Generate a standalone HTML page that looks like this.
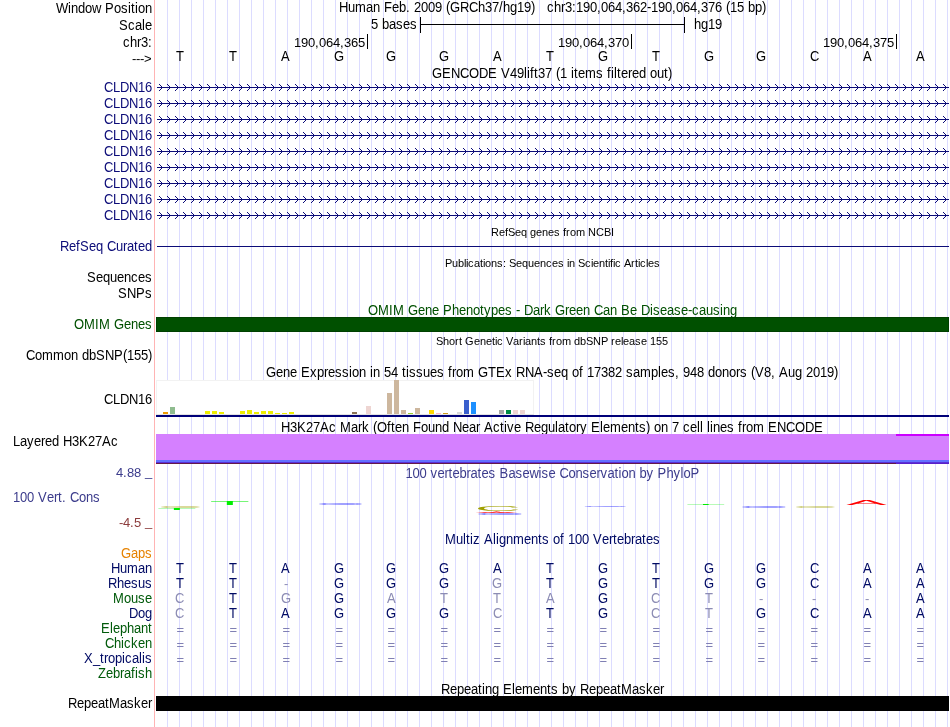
<!DOCTYPE html>
<html><head><meta charset="utf-8"><title>UCSC Genome Browser chr3:190,064,362-190,064,376</title>
<style>
html,body{margin:0;padding:0;background:#fff;}
svg{display:block;font-family:'Liberation Sans', Arial, Helvetica, sans-serif;font-size:13px;will-change:transform;}
</style></head>
<body>
<svg width="950" height="727" viewBox="0 0 950 727">
<rect width="950" height="727" fill="#fff"/>
<g shape-rendering="crispEdges">
<rect x="167" y="0" width="1" height="727" fill="#dcdcff"/>
<rect x="179" y="0" width="1" height="727" fill="#dcdcff"/>
<rect x="191" y="0" width="1" height="727" fill="#dcdcff"/>
<rect x="203" y="0" width="1" height="727" fill="#dcdcff"/>
<rect x="215" y="0" width="1" height="727" fill="#dcdcff"/>
<rect x="227" y="0" width="1" height="727" fill="#dcdcff"/>
<rect x="239" y="0" width="1" height="727" fill="#dcdcff"/>
<rect x="251" y="0" width="1" height="727" fill="#dcdcff"/>
<rect x="263" y="0" width="1" height="727" fill="#dcdcff"/>
<rect x="275" y="0" width="1" height="727" fill="#dcdcff"/>
<rect x="287" y="0" width="1" height="727" fill="#dcdcff"/>
<rect x="299" y="0" width="1" height="727" fill="#dcdcff"/>
<rect x="311" y="0" width="1" height="727" fill="#dcdcff"/>
<rect x="323" y="0" width="1" height="727" fill="#dcdcff"/>
<rect x="335" y="0" width="1" height="727" fill="#dcdcff"/>
<rect x="347" y="0" width="1" height="727" fill="#dcdcff"/>
<rect x="359" y="0" width="1" height="727" fill="#dcdcff"/>
<rect x="371" y="0" width="1" height="727" fill="#dcdcff"/>
<rect x="383" y="0" width="1" height="727" fill="#dcdcff"/>
<rect x="395" y="0" width="1" height="727" fill="#dcdcff"/>
<rect x="407" y="0" width="1" height="727" fill="#dcdcff"/>
<rect x="419" y="0" width="1" height="727" fill="#dcdcff"/>
<rect x="431" y="0" width="1" height="727" fill="#dcdcff"/>
<rect x="443" y="0" width="1" height="727" fill="#dcdcff"/>
<rect x="455" y="0" width="1" height="727" fill="#dcdcff"/>
<rect x="467" y="0" width="1" height="727" fill="#dcdcff"/>
<rect x="479" y="0" width="1" height="727" fill="#dcdcff"/>
<rect x="491" y="0" width="1" height="727" fill="#dcdcff"/>
<rect x="503" y="0" width="1" height="727" fill="#dcdcff"/>
<rect x="515" y="0" width="1" height="727" fill="#dcdcff"/>
<rect x="527" y="0" width="1" height="727" fill="#dcdcff"/>
<rect x="539" y="0" width="1" height="727" fill="#dcdcff"/>
<rect x="551" y="0" width="1" height="727" fill="#dcdcff"/>
<rect x="563" y="0" width="1" height="727" fill="#dcdcff"/>
<rect x="575" y="0" width="1" height="727" fill="#dcdcff"/>
<rect x="587" y="0" width="1" height="727" fill="#dcdcff"/>
<rect x="599" y="0" width="1" height="727" fill="#dcdcff"/>
<rect x="611" y="0" width="1" height="727" fill="#dcdcff"/>
<rect x="623" y="0" width="1" height="727" fill="#dcdcff"/>
<rect x="635" y="0" width="1" height="727" fill="#dcdcff"/>
<rect x="647" y="0" width="1" height="727" fill="#dcdcff"/>
<rect x="659" y="0" width="1" height="727" fill="#dcdcff"/>
<rect x="671" y="0" width="1" height="727" fill="#dcdcff"/>
<rect x="683" y="0" width="1" height="727" fill="#dcdcff"/>
<rect x="695" y="0" width="1" height="727" fill="#dcdcff"/>
<rect x="707" y="0" width="1" height="727" fill="#dcdcff"/>
<rect x="719" y="0" width="1" height="727" fill="#dcdcff"/>
<rect x="731" y="0" width="1" height="727" fill="#dcdcff"/>
<rect x="743" y="0" width="1" height="727" fill="#dcdcff"/>
<rect x="755" y="0" width="1" height="727" fill="#dcdcff"/>
<rect x="767" y="0" width="1" height="727" fill="#dcdcff"/>
<rect x="779" y="0" width="1" height="727" fill="#dcdcff"/>
<rect x="791" y="0" width="1" height="727" fill="#dcdcff"/>
<rect x="803" y="0" width="1" height="727" fill="#dcdcff"/>
<rect x="815" y="0" width="1" height="727" fill="#dcdcff"/>
<rect x="827" y="0" width="1" height="727" fill="#dcdcff"/>
<rect x="839" y="0" width="1" height="727" fill="#dcdcff"/>
<rect x="851" y="0" width="1" height="727" fill="#dcdcff"/>
<rect x="863" y="0" width="1" height="727" fill="#dcdcff"/>
<rect x="875" y="0" width="1" height="727" fill="#dcdcff"/>
<rect x="887" y="0" width="1" height="727" fill="#dcdcff"/>
<rect x="899" y="0" width="1" height="727" fill="#dcdcff"/>
<rect x="911" y="0" width="1" height="727" fill="#dcdcff"/>
<rect x="923" y="0" width="1" height="727" fill="#dcdcff"/>
<rect x="935" y="0" width="1" height="727" fill="#dcdcff"/>
<rect x="947" y="0" width="1" height="727" fill="#dcdcff"/>
<rect x="154" y="0" width="1" height="727" fill="#ffb4b4"/>
</g>
<text transform="translate(0,13) scale(1,1.07)"><tspan x="56 68 71 78 85 92">Window</tspan> <tspan x="105 114 121 128 131 135 138 145">Position</tspan></text>
<text transform="translate(0,12) scale(1,1.07)"><tspan x="339 348 355 366 373">Human</tspan> <tspan x="384 392 399 406">Feb.</tspan> <tspan x="414 421 428 435">2009</tspan> <tspan x="446 450 460 469 478 485 492 499 503 510 517 524 531">(GRCh37/hg19)</tspan> <tspan x="547 554 561 565 572 576 583 590 597 601 608 615 622 626 633 640 647 651 658 665 672 676 683 690 697 701 708 715">chr3:190,064,362-190,064,376</tspan> <tspan x="726 730 737">(15</tspan> <tspan x="748 755 762">bp)</tspan></text>
<text transform="translate(0,30) scale(1,1.07)"><tspan x="119 128 135 142 145">Scale</tspan></text>
<text transform="translate(0,29) scale(1,1.07)"><tspan x="371">5</tspan> <tspan x="382 389 396 403 410">bases</tspan></text>
<text transform="translate(0,29) scale(1,1.07)"><tspan x="694 701 708 715">hg19</tspan></text>
<g shape-rendering="crispEdges">
<rect x="420" y="24" width="265" height="1" fill="#000"/>
<rect x="420" y="17" width="1" height="16" fill="#000"/>
<rect x="684" y="17" width="1" height="16" fill="#000"/>
</g>
<text transform="translate(0,47) scale(1,1.07)"><tspan x="123 130 137 141 148">chr3:</tspan></text>
<text transform="translate(0,47) scale(1,1.0)"><tspan x="294 301 308 315 319 326 333 340 344 351 358">190,064,365</tspan></text>
<rect x="367" y="34" width="1" height="15" fill="#000" shape-rendering="crispEdges"/>
<text transform="translate(0,47) scale(1,1.0)"><tspan x="558 565 572 579 583 590 597 604 608 615 622">190,064,370</tspan></text>
<rect x="631" y="34" width="1" height="15" fill="#000" shape-rendering="crispEdges"/>
<text transform="translate(0,47) scale(1,1.0)"><tspan x="823 830 837 844 848 855 862 869 873 880 887">190,064,375</tspan></text>
<rect x="896" y="34" width="1" height="15" fill="#000" shape-rendering="crispEdges"/>
<text transform="translate(0,63) scale(1,1.0)"><tspan x="132 136 140 144">---&gt;</tspan></text>
<text transform="translate(0,61) scale(1,1.11)"><tspan x="176">T</tspan></text>
<text transform="translate(0,61) scale(1,1.11)"><tspan x="229">T</tspan></text>
<text transform="translate(0,61) scale(1,1.11)"><tspan x="281">A</tspan></text>
<text transform="translate(0,61) scale(1,1.11)"><tspan x="334">G</tspan></text>
<text transform="translate(0,61) scale(1,1.11)"><tspan x="386">G</tspan></text>
<text transform="translate(0,61) scale(1,1.11)"><tspan x="439">G</tspan></text>
<text transform="translate(0,61) scale(1,1.11)"><tspan x="493">A</tspan></text>
<text transform="translate(0,61) scale(1,1.11)"><tspan x="546">T</tspan></text>
<text transform="translate(0,61) scale(1,1.11)"><tspan x="598">G</tspan></text>
<text transform="translate(0,61) scale(1,1.11)"><tspan x="652">T</tspan></text>
<text transform="translate(0,61) scale(1,1.11)"><tspan x="704">G</tspan></text>
<text transform="translate(0,61) scale(1,1.11)"><tspan x="756">G</tspan></text>
<text transform="translate(0,61) scale(1,1.11)"><tspan x="810">C</tspan></text>
<text transform="translate(0,61) scale(1,1.11)"><tspan x="863">A</tspan></text>
<text transform="translate(0,61) scale(1,1.11)"><tspan x="916">A</tspan></text>
<text transform="translate(0,78) scale(1,1.07)"><tspan x="432 442 451 460 469 479 488">GENCODE</tspan> <tspan x="501 510 517 524 527 530 534 538 545">V49lift37</tspan> <tspan x="556 560">(1</tspan> <tspan x="571 574 578 585 596">items</tspan> <tspan x="607 611 614 617 621 628 632 639">filtered</tspan> <tspan x="650 657 664 668">out)</tspan></text>
<defs><pattern id="chev" x="155" y="0" width="8" height="16" patternUnits="userSpaceOnUse"><path fill="#0c0c78" d="M4,0h1v1h1v1h1v1h1v1h-1v1h-1v1h-1v1h-1v-1h1v-1h1v-1h-3v-1h3v-1h-1v-1h-1z"/></pattern></defs>
<g shape-rendering="crispEdges">
<rect x="157" y="87" width="792" height="1" fill="#0c0c78"/>
<g transform="translate(0,84)"><rect x="157" y="0" width="792" height="7" fill="url(#chev)"/></g>
<rect x="157" y="103" width="792" height="1" fill="#0c0c78"/>
<g transform="translate(0,100)"><rect x="157" y="0" width="792" height="7" fill="url(#chev)"/></g>
<rect x="157" y="119" width="792" height="1" fill="#0c0c78"/>
<g transform="translate(0,116)"><rect x="157" y="0" width="792" height="7" fill="url(#chev)"/></g>
<rect x="157" y="135" width="792" height="1" fill="#0c0c78"/>
<g transform="translate(0,132)"><rect x="157" y="0" width="792" height="7" fill="url(#chev)"/></g>
<rect x="157" y="151" width="792" height="1" fill="#0c0c78"/>
<g transform="translate(0,148)"><rect x="157" y="0" width="792" height="7" fill="url(#chev)"/></g>
<rect x="157" y="167" width="792" height="1" fill="#0c0c78"/>
<g transform="translate(0,164)"><rect x="157" y="0" width="792" height="7" fill="url(#chev)"/></g>
<rect x="157" y="183" width="792" height="1" fill="#0c0c78"/>
<g transform="translate(0,180)"><rect x="157" y="0" width="792" height="7" fill="url(#chev)"/></g>
<rect x="157" y="199" width="792" height="1" fill="#0c0c78"/>
<g transform="translate(0,196)"><rect x="157" y="0" width="792" height="7" fill="url(#chev)"/></g>
<rect x="157" y="215" width="792" height="1" fill="#0c0c78"/>
<g transform="translate(0,212)"><rect x="157" y="0" width="792" height="7" fill="url(#chev)"/></g>
</g>
<text transform="translate(0,92) scale(1,1.11)" fill="#0c0c78"><tspan x="104 113 120 129 138 145">CLDN16</tspan></text>
<text transform="translate(0,108) scale(1,1.11)" fill="#0c0c78"><tspan x="104 113 120 129 138 145">CLDN16</tspan></text>
<text transform="translate(0,124) scale(1,1.11)" fill="#0c0c78"><tspan x="104 113 120 129 138 145">CLDN16</tspan></text>
<text transform="translate(0,140) scale(1,1.11)" fill="#0c0c78"><tspan x="104 113 120 129 138 145">CLDN16</tspan></text>
<text transform="translate(0,156) scale(1,1.11)" fill="#0c0c78"><tspan x="104 113 120 129 138 145">CLDN16</tspan></text>
<text transform="translate(0,172) scale(1,1.11)" fill="#0c0c78"><tspan x="104 113 120 129 138 145">CLDN16</tspan></text>
<text transform="translate(0,188) scale(1,1.11)" fill="#0c0c78"><tspan x="104 113 120 129 138 145">CLDN16</tspan></text>
<text transform="translate(0,204) scale(1,1.11)" fill="#0c0c78"><tspan x="104 113 120 129 138 145">CLDN16</tspan></text>
<text transform="translate(0,220) scale(1,1.11)" fill="#0c0c78"><tspan x="104 113 120 129 138 145">CLDN16</tspan></text>
<text transform="translate(0,236) scale(1,1.05)" font-size="11"><tspan x="491 499 505 508 515 521">RefSeq</tspan> <tspan x="530 536 542 548 554">genes</tspan> <tspan x="563 566 570 576">from</tspan> <tspan x="588 596 604 611">NCBI</tspan></text>
<text transform="translate(0,251) scale(1,1.07)" fill="#0c0c78"><tspan x="60 69 76 80 89 96">RefSeq</tspan> <tspan x="107 116 123 127 134 138 145">Curated</tspan></text>
<rect x="157" y="246" width="792" height="1" fill="#0c0c78"/>
<text transform="translate(0,267) scale(1,1.05)" font-size="11"><tspan x="445 452 458 464 466 468 474 480 483 485 491 497 503">Publications:</tspan> <tspan x="509 516 522 528 534 540 546 552 558">Sequences</tspan> <tspan x="567 569">in</tspan> <tspan x="578 585 591 593 599 605 608 610 613 615">Scientific</tspan> <tspan x="624 631 635 638 640 646 648 654">Articles</tspan></text>
<text transform="translate(0,282) scale(1,1.07)"><tspan x="87 96 103 110 117 124 131 138 145">Sequences</tspan></text>
<text transform="translate(0,298) scale(1,1.07)"><tspan x="118 127 136 145">SNPs</tspan></text>
<text transform="translate(0,315) scale(1,1.07)" fill="#005000"><tspan x="368 378 389 393">OMIM</tspan> <tspan x="408 418 425 432">Gene</tspan> <tspan x="443 452 459 466 473 480 484 491 498 505">Phenotypes</tspan> <tspan x="516">-</tspan> <tspan x="524 533 540 544">Dark</tspan> <tspan x="555 565 569 576 583">Green</tspan> <tspan x="594 603 610">Can</tspan> <tspan x="621 630">Be</tspan> <tspan x="641 650 653 660 667 674 681 688 692 699 706 713 720 723 730">Disease-causing</tspan></text>
<text transform="translate(0,329) scale(1,1.07)" fill="#005000"><tspan x="74 84 95 99">OMIM</tspan> <tspan x="114 124 131 138 145">Genes</tspan></text>
<g shape-rendering="crispEdges"><rect x="156" y="317" width="793" height="15" fill="#004000"/><rect x="157" y="318" width="791" height="13" fill="#005000"/></g>
<text transform="translate(0,345) scale(1,1.05)" font-size="11"><tspan x="436 443 449 455 459">Short</tspan> <tspan x="465 474 480 486 492 495 497">Genetic</tspan> <tspan x="506 513 519 523 525 531 537 540">Variants</tspan> <tspan x="549 552 556 562">from</tspan> <tspan x="574 580 586 593 601">dbSNP</tspan> <tspan x="611 615 621 623 629 635 641">release</tspan> <tspan x="650 656 662">155</tspan></text>
<text transform="translate(0,360) scale(1,1.07)"><tspan x="26 35 42 53 64 71">Common</tspan> <tspan x="82 89 96 105 114 123 127 134 141 148">dbSNP(155)</tspan></text>
<text transform="translate(0,377) scale(1,1.07)"><tspan x="266 276 283 290">Gene</tspan> <tspan x="301 310 317 324 328 335 342 349 352 359">Expression</tspan> <tspan x="370 373">in</tspan> <tspan x="384 391">54</tspan> <tspan x="402 406 409 416 423 430 437">tissues</tspan> <tspan x="448 452 456 463">from</tspan> <tspan x="478 488 496 505">GTEx</tspan> <tspan x="516 525 534 543 547 554 561">RNA-seq</tspan> <tspan x="572 579">of</tspan> <tspan x="587 594 601 608 615">17382</tspan> <tspan x="626 633 640 651 658 661 668 675">samples,</tspan> <tspan x="683 690 697">948</tspan> <tspan x="708 715 722 729 736 740">donors</tspan> <tspan x="751 755 764 771">(V8,</tspan> <tspan x="779 788 795">Aug</tspan> <tspan x="806 813 820 827 834">2019)</tspan></text>
<text transform="translate(0,404) scale(1,1.11)"><tspan x="104 113 120 129 138 145">CLDN16</tspan></text>
<g shape-rendering="crispEdges">
<rect x="156" y="380" width="378" height="35" fill="#f2f2f2"/>
<rect x="157" y="381" width="376" height="33" fill="#fff"/>
<rect x="156" y="414" width="378" height="1" fill="#e4e4e4"/>
<rect x="163" y="412" width="5" height="2" fill="#EE9A00"/>
<rect x="170" y="407" width="5" height="7" fill="#8FBC8F"/>
<rect x="205" y="411" width="5" height="3" fill="#EEEE00"/>
<rect x="212" y="411" width="5" height="3" fill="#EEEE00"/>
<rect x="219" y="412" width="5" height="2" fill="#EEEE00"/>
<rect x="240" y="411" width="5" height="3" fill="#EEEE00"/>
<rect x="247" y="410" width="5" height="4" fill="#EEEE00"/>
<rect x="254" y="412" width="5" height="2" fill="#EEEE00"/>
<rect x="261" y="411" width="5" height="3" fill="#EEEE00"/>
<rect x="268" y="411" width="5" height="3" fill="#EEEE00"/>
<rect x="275" y="413" width="5" height="1" fill="#EEEE00"/>
<rect x="282" y="413" width="5" height="1" fill="#EEEE00"/>
<rect x="289" y="412" width="5" height="2" fill="#EEEE00"/>
<rect x="352" y="412" width="5" height="2" fill="#8B7355"/>
<rect x="366" y="406" width="5" height="8" fill="#EED5D2"/>
<rect x="387" y="393" width="5" height="21" fill="#CDB79E"/>
<rect x="394" y="380" width="5" height="34" fill="#CDB79E"/>
<rect x="401" y="410" width="5" height="4" fill="#CDB79E"/>
<rect x="408" y="413" width="5" height="1" fill="#9ACD32"/>
<rect x="415" y="408" width="5" height="6" fill="#CDB79E"/>
<rect x="429" y="410" width="5" height="4" fill="#FFD700"/>
<rect x="436" y="413" width="5" height="1" fill="#FFB6C1"/>
<rect x="443" y="413" width="5" height="1" fill="#CD9B1D"/>
<rect x="457" y="412" width="5" height="2" fill="#D9D9D9"/>
<rect x="464" y="400" width="5" height="14" fill="#3A5FCD"/>
<rect x="471" y="402" width="5" height="12" fill="#1E90FF"/>
<rect x="499" y="410" width="5" height="4" fill="#A6A6A6"/>
<rect x="506" y="410" width="5" height="4" fill="#008B45"/>
<rect x="513" y="410" width="5" height="4" fill="#EED5D2"/>
<rect x="520" y="410" width="5" height="4" fill="#EED5D2"/>
<rect x="156" y="415" width="793" height="2" fill="#000078"/>
</g>
<text transform="translate(0,432) scale(1,1.07)"><tspan x="281 290 297 306 313 320 329">H3K27Ac</tspan> <tspan x="340 351 358 362">Mark</tspan> <tspan x="373 377 387 391 395 402">(Often</tspan> <tspan x="413 421 428 435 442">Found</tspan> <tspan x="453 462 469 476">Near</tspan> <tspan x="484 493 500 504 507 514">Active</tspan> <tspan x="525 534 541 548 555 558 565 569 576 580">Regulatory</tspan> <tspan x="591 600 603 610 621 628 635 639 646">Elements)</tspan> <tspan x="654 661">on</tspan> <tspan x="672">7</tspan> <tspan x="683 690 697 700">cell</tspan> <tspan x="707 710 713 720 727">lines</tspan> <tspan x="738 742 746 753">from</tspan> <tspan x="768 777 786 795 805 814">ENCODE</tspan></text>
<text transform="translate(0,446) scale(1,1.07)"><tspan x="13 20 27 34 41 45 52">Layered</tspan> <tspan x="63 72 79 88 95 102 111">H3K27Ac</tspan></text>
<g shape-rendering="crispEdges">
<rect x="156" y="434" width="793" height="26" fill="#d580ff"/>
<rect x="896" y="434" width="53" height="2" fill="#cc00ff"/>
<rect x="156" y="460" width="793" height="2" fill="#6470ff"/>
<rect x="156" y="462" width="793" height="1" fill="#5a30d8"/>
<rect x="156" y="463" width="740" height="1" fill="#64184a"/>
<rect x="896" y="463" width="53" height="1" fill="#5a20c8"/>
</g>
<text transform="translate(0,478) scale(1,1.07)" fill="#3c3c8c"><tspan x="405.5 412.5 419.5">100</tspan> <tspan x="430.5 437.5 444.5 448.5 452.5 459.5 466.5 470.5 477.5 481.5 488.5">vertebrates</tspan> <tspan x="499.5 508.5 515.5 522.5 529.5 538.5 541.5 548.5">Basewise</tspan> <tspan x="559.5 568.5 575.5 582.5 589.5 596.5 600.5 607.5 614.5 618.5 621.5 628.5">Conservation</tspan> <tspan x="639.5 646.5">by</tspan> <tspan x="657.5 666.5 673.5 680.5 683.5 690.5">PhyloP</tspan></text>
<text transform="translate(0,477.2) scale(1,1.0)" fill="#3c3c8c"><tspan x="116 123 127 134">4.88</tspan></text>
<text transform="translate(0,476.3) scale(1,1.0)" fill="#3c3c8c"><tspan x="145">_</tspan></text>
<text transform="translate(0,502) scale(1,1.07)" fill="#3c3c8c"><tspan x="13 20 27">100</tspan> <tspan x="38 47 54 58 62">Vert.</tspan> <tspan x="70 79 86 93">Cons</tspan></text>
<text transform="translate(0,527.2) scale(1,1.0)" fill="#8c3c3c"><tspan x="119 123 130 134">-4.5</tspan></text>
<text transform="translate(0,526.3) scale(1,1.0)" fill="#8c3c3c"><tspan x="145">_</tspan></text>
<text transform="translate(157.63,506.99) scale(4.800,0.1086)" fill="#a0a000" fill-opacity="0.75">C</text>
<text transform="translate(157.63,507.99) scale(4.800,0.1086)" fill="#a0a000" fill-opacity="0.75">C</text>
<text transform="translate(157.04,510.00) scale(5.034,0.2237)" fill="#00ee00" text-rendering="geometricPrecision">T</text>
<text transform="translate(209.83,505.00) scale(5.061,0.4474)" fill="#00ee00">T</text>
<text transform="translate(315.59,503.99) scale(5.088,0.1086)" fill="#0000ff" fill-opacity="0.75">G</text>
<text transform="translate(315.59,504.99) scale(5.088,0.1086)" fill="#0000ff" fill-opacity="0.75">G</text>
<text transform="translate(474.75,510.93) scale(4.921,0.5429)" fill="#a0a000">C</text>
<text transform="translate(478.73,513.12) scale(4.116,0.1610)" fill="#ff0000" stroke="#ff0000" stroke-width="1.0">A</text>
<text transform="translate(475.25,513.99) scale(5.006,0.1086)" fill="#0000ff" fill-opacity="0.75">G</text>
<text transform="translate(475.25,514.99) scale(5.006,0.1086)" fill="#0000ff" fill-opacity="0.75">G</text>
<text transform="translate(581.01,506.99) scale(4.912,0.1086)" fill="#0000ff" fill-opacity="0.75">G</text>
<text transform="translate(685.94,505.00) scale(5.034,0.1119)" fill="#00ee00">T</text>
<text transform="translate(739.24,506.99) scale(5.018,0.1086)" fill="#0000ff" fill-opacity="0.75">G</text>
<text transform="translate(739.24,507.99) scale(5.018,0.1086)" fill="#0000ff" fill-opacity="0.75">G</text>
<text transform="translate(792.64,506.99) scale(4.787,0.1086)" fill="#a0a000" fill-opacity="0.75">C</text>
<text transform="translate(792.64,507.99) scale(4.787,0.1086)" fill="#a0a000" fill-opacity="0.75">C</text>
<text transform="translate(846.36,505.00) scale(4.664,0.5593)" fill="#ff0000">A</text>
<text transform="translate(0,544) scale(1,1.07)" fill="#000a64"><tspan x="445 456 463 466 470 473">Multiz</tspan> <tspan x="484 493 496 499 506 513 524 531 538 542">Alignments</tspan> <tspan x="553 560">of</tspan> <tspan x="568 575 582">100</tspan> <tspan x="593 602 609 613 617 624 631 635 642 646 653">Vertebrates</tspan></text>
<text transform="translate(0,558) scale(1,1.07)" fill="#e68200"><tspan x="121 131 138 145">Gaps</tspan></text>
<text transform="translate(0,573) scale(1,1.07)" fill="#000a64"><tspan x="111 120 127 138 145">Human</tspan></text>
<text transform="translate(0,588) scale(1,1.07)" fill="#000a64"><tspan x="108 117 124 131 138 145">Rhesus</tspan></text>
<text transform="translate(0,603) scale(1,1.07)" fill="#005a0a"><tspan x="113 124 131 138 145">Mouse</tspan></text>
<text transform="translate(0,618) scale(1,1.07)" fill="#000a64"><tspan x="129 138 145">Dog</tspan></text>
<text transform="translate(0,633) scale(1,1.07)" fill="#005a0a"><tspan x="101 110 113 120 127 134 141 148">Elephant</tspan></text>
<text transform="translate(0,648) scale(1,1.07)" fill="#005a0a"><tspan x="105 114 121 124 131 138 145">Chicken</tspan></text>
<text transform="translate(0,663) scale(1,1.07)" fill="#000a64"><tspan x="84 93 100 104 108 115 122 125 132 139 142 145">X_tropicalis</tspan></text>
<text transform="translate(0,678) scale(1,1.07)" fill="#005a0a"><tspan x="98 106 113 120 124 131 135 138 145">Zebrafish</tspan></text>
<text transform="translate(0,573) scale(1,1.11)" fill="#000a64"><tspan x="176">T</tspan></text>
<text transform="translate(0,573) scale(1,1.11)" fill="#000a64"><tspan x="229">T</tspan></text>
<text transform="translate(0,573) scale(1,1.11)" fill="#000a64"><tspan x="281">A</tspan></text>
<text transform="translate(0,573) scale(1,1.11)" fill="#000a64"><tspan x="334">G</tspan></text>
<text transform="translate(0,573) scale(1,1.11)" fill="#000a64"><tspan x="386">G</tspan></text>
<text transform="translate(0,573) scale(1,1.11)" fill="#000a64"><tspan x="439">G</tspan></text>
<text transform="translate(0,573) scale(1,1.11)" fill="#000a64"><tspan x="493">A</tspan></text>
<text transform="translate(0,573) scale(1,1.11)" fill="#000a64"><tspan x="546">T</tspan></text>
<text transform="translate(0,573) scale(1,1.11)" fill="#000a64"><tspan x="598">G</tspan></text>
<text transform="translate(0,573) scale(1,1.11)" fill="#000a64"><tspan x="652">T</tspan></text>
<text transform="translate(0,573) scale(1,1.11)" fill="#000a64"><tspan x="704">G</tspan></text>
<text transform="translate(0,573) scale(1,1.11)" fill="#000a64"><tspan x="756">G</tspan></text>
<text transform="translate(0,573) scale(1,1.11)" fill="#000a64"><tspan x="810">C</tspan></text>
<text transform="translate(0,573) scale(1,1.11)" fill="#000a64"><tspan x="863">A</tspan></text>
<text transform="translate(0,573) scale(1,1.11)" fill="#000a64"><tspan x="916">A</tspan></text>
<text transform="translate(0,588) scale(1,1.11)" fill="#000a64"><tspan x="176">T</tspan></text>
<text transform="translate(0,588) scale(1,1.11)" fill="#000a64"><tspan x="229">T</tspan></text>
<text transform="translate(0,588) scale(1,1.0)" fill="#8c8cb4"><tspan x="284">-</tspan></text>
<text transform="translate(0,588) scale(1,1.11)" fill="#000a64"><tspan x="334">G</tspan></text>
<text transform="translate(0,588) scale(1,1.11)" fill="#000a64"><tspan x="386">G</tspan></text>
<text transform="translate(0,588) scale(1,1.11)" fill="#000a64"><tspan x="439">G</tspan></text>
<text transform="translate(0,588) scale(1,1.11)" fill="#8c8cb4"><tspan x="492">G</tspan></text>
<text transform="translate(0,588) scale(1,1.11)" fill="#000a64"><tspan x="546">T</tspan></text>
<text transform="translate(0,588) scale(1,1.11)" fill="#000a64"><tspan x="598">G</tspan></text>
<text transform="translate(0,588) scale(1,1.11)" fill="#000a64"><tspan x="652">T</tspan></text>
<text transform="translate(0,588) scale(1,1.11)" fill="#000a64"><tspan x="704">G</tspan></text>
<text transform="translate(0,588) scale(1,1.11)" fill="#000a64"><tspan x="756">G</tspan></text>
<text transform="translate(0,588) scale(1,1.11)" fill="#000a64"><tspan x="810">C</tspan></text>
<text transform="translate(0,588) scale(1,1.11)" fill="#000a64"><tspan x="863">A</tspan></text>
<text transform="translate(0,588) scale(1,1.11)" fill="#000a64"><tspan x="916">A</tspan></text>
<text transform="translate(0,603) scale(1,1.11)" fill="#8c8cb4"><tspan x="175">C</tspan></text>
<text transform="translate(0,603) scale(1,1.11)" fill="#000a64"><tspan x="229">T</tspan></text>
<text transform="translate(0,603) scale(1,1.11)" fill="#8c8cb4"><tspan x="281">G</tspan></text>
<text transform="translate(0,603) scale(1,1.11)" fill="#000a64"><tspan x="334">G</tspan></text>
<text transform="translate(0,603) scale(1,1.11)" fill="#8c8cb4"><tspan x="387">A</tspan></text>
<text transform="translate(0,603) scale(1,1.11)" fill="#8c8cb4"><tspan x="440">T</tspan></text>
<text transform="translate(0,603) scale(1,1.11)" fill="#8c8cb4"><tspan x="493">T</tspan></text>
<text transform="translate(0,603) scale(1,1.11)" fill="#8c8cb4"><tspan x="546">A</tspan></text>
<text transform="translate(0,603) scale(1,1.11)" fill="#000a64"><tspan x="598">G</tspan></text>
<text transform="translate(0,603) scale(1,1.11)" fill="#8c8cb4"><tspan x="651">C</tspan></text>
<text transform="translate(0,603) scale(1,1.11)" fill="#8c8cb4"><tspan x="705">T</tspan></text>
<text transform="translate(0,603) scale(1,1.0)" fill="#8c8cb4"><tspan x="759">-</tspan></text>
<text transform="translate(0,603) scale(1,1.0)" fill="#8c8cb4"><tspan x="812">-</tspan></text>
<text transform="translate(0,603) scale(1,1.0)" fill="#8c8cb4"><tspan x="865">-</tspan></text>
<text transform="translate(0,603) scale(1,1.11)" fill="#000a64"><tspan x="916">A</tspan></text>
<text transform="translate(0,618) scale(1,1.11)" fill="#8c8cb4"><tspan x="175">C</tspan></text>
<text transform="translate(0,618) scale(1,1.11)" fill="#000a64"><tspan x="229">T</tspan></text>
<text transform="translate(0,618) scale(1,1.11)" fill="#000a64"><tspan x="281">A</tspan></text>
<text transform="translate(0,618) scale(1,1.11)" fill="#000a64"><tspan x="334">G</tspan></text>
<text transform="translate(0,618) scale(1,1.11)" fill="#000a64"><tspan x="386">G</tspan></text>
<text transform="translate(0,618) scale(1,1.11)" fill="#000a64"><tspan x="439">G</tspan></text>
<text transform="translate(0,618) scale(1,1.11)" fill="#8c8cb4"><tspan x="493">C</tspan></text>
<text transform="translate(0,618) scale(1,1.11)" fill="#000a64"><tspan x="546">T</tspan></text>
<text transform="translate(0,618) scale(1,1.11)" fill="#000a64"><tspan x="598">G</tspan></text>
<text transform="translate(0,618) scale(1,1.11)" fill="#8c8cb4"><tspan x="651">C</tspan></text>
<text transform="translate(0,618) scale(1,1.11)" fill="#8c8cb4"><tspan x="705">T</tspan></text>
<text transform="translate(0,618) scale(1,1.11)" fill="#000a64"><tspan x="756">G</tspan></text>
<text transform="translate(0,618) scale(1,1.11)" fill="#000a64"><tspan x="810">C</tspan></text>
<text transform="translate(0,618) scale(1,1.11)" fill="#000a64"><tspan x="863">A</tspan></text>
<text transform="translate(0,618) scale(1,1.11)" fill="#000a64"><tspan x="916">A</tspan></text>
<text transform="translate(0,634.2) scale(1,1.0)" fill="#8080b4"><tspan x="176.6">=</tspan></text>
<text transform="translate(0,634.2) scale(1,1.0)" fill="#8080b4"><tspan x="229.6">=</tspan></text>
<text transform="translate(0,634.2) scale(1,1.0)" fill="#8080b4"><tspan x="282.6">=</tspan></text>
<text transform="translate(0,634.2) scale(1,1.0)" fill="#8080b4"><tspan x="335.6">=</tspan></text>
<text transform="translate(0,634.2) scale(1,1.0)" fill="#8080b4"><tspan x="387.6">=</tspan></text>
<text transform="translate(0,634.2) scale(1,1.0)" fill="#8080b4"><tspan x="440.6">=</tspan></text>
<text transform="translate(0,634.2) scale(1,1.0)" fill="#8080b4"><tspan x="493.6">=</tspan></text>
<text transform="translate(0,634.2) scale(1,1.0)" fill="#8080b4"><tspan x="546.6">=</tspan></text>
<text transform="translate(0,634.2) scale(1,1.0)" fill="#8080b4"><tspan x="599.6">=</tspan></text>
<text transform="translate(0,634.2) scale(1,1.0)" fill="#8080b4"><tspan x="652.6">=</tspan></text>
<text transform="translate(0,634.2) scale(1,1.0)" fill="#8080b4"><tspan x="705.6">=</tspan></text>
<text transform="translate(0,634.2) scale(1,1.0)" fill="#8080b4"><tspan x="757.6">=</tspan></text>
<text transform="translate(0,634.2) scale(1,1.0)" fill="#8080b4"><tspan x="810.6">=</tspan></text>
<text transform="translate(0,634.2) scale(1,1.0)" fill="#8080b4"><tspan x="863.6">=</tspan></text>
<text transform="translate(0,634.2) scale(1,1.0)" fill="#8080b4"><tspan x="916.6">=</tspan></text>
<text transform="translate(0,649.2) scale(1,1.0)" fill="#8080b4"><tspan x="176.6">=</tspan></text>
<text transform="translate(0,649.2) scale(1,1.0)" fill="#8080b4"><tspan x="229.6">=</tspan></text>
<text transform="translate(0,649.2) scale(1,1.0)" fill="#8080b4"><tspan x="282.6">=</tspan></text>
<text transform="translate(0,649.2) scale(1,1.0)" fill="#8080b4"><tspan x="335.6">=</tspan></text>
<text transform="translate(0,649.2) scale(1,1.0)" fill="#8080b4"><tspan x="387.6">=</tspan></text>
<text transform="translate(0,649.2) scale(1,1.0)" fill="#8080b4"><tspan x="440.6">=</tspan></text>
<text transform="translate(0,649.2) scale(1,1.0)" fill="#8080b4"><tspan x="493.6">=</tspan></text>
<text transform="translate(0,649.2) scale(1,1.0)" fill="#8080b4"><tspan x="546.6">=</tspan></text>
<text transform="translate(0,649.2) scale(1,1.0)" fill="#8080b4"><tspan x="599.6">=</tspan></text>
<text transform="translate(0,649.2) scale(1,1.0)" fill="#8080b4"><tspan x="652.6">=</tspan></text>
<text transform="translate(0,649.2) scale(1,1.0)" fill="#8080b4"><tspan x="705.6">=</tspan></text>
<text transform="translate(0,649.2) scale(1,1.0)" fill="#8080b4"><tspan x="757.6">=</tspan></text>
<text transform="translate(0,649.2) scale(1,1.0)" fill="#8080b4"><tspan x="810.6">=</tspan></text>
<text transform="translate(0,649.2) scale(1,1.0)" fill="#8080b4"><tspan x="863.6">=</tspan></text>
<text transform="translate(0,649.2) scale(1,1.0)" fill="#8080b4"><tspan x="916.6">=</tspan></text>
<text transform="translate(0,664.2) scale(1,1.0)" fill="#8080b4"><tspan x="176.6">=</tspan></text>
<text transform="translate(0,664.2) scale(1,1.0)" fill="#8080b4"><tspan x="229.6">=</tspan></text>
<text transform="translate(0,664.2) scale(1,1.0)" fill="#8080b4"><tspan x="282.6">=</tspan></text>
<text transform="translate(0,664.2) scale(1,1.0)" fill="#8080b4"><tspan x="335.6">=</tspan></text>
<text transform="translate(0,664.2) scale(1,1.0)" fill="#8080b4"><tspan x="387.6">=</tspan></text>
<text transform="translate(0,664.2) scale(1,1.0)" fill="#8080b4"><tspan x="440.6">=</tspan></text>
<text transform="translate(0,664.2) scale(1,1.0)" fill="#8080b4"><tspan x="493.6">=</tspan></text>
<text transform="translate(0,664.2) scale(1,1.0)" fill="#8080b4"><tspan x="546.6">=</tspan></text>
<text transform="translate(0,664.2) scale(1,1.0)" fill="#8080b4"><tspan x="599.6">=</tspan></text>
<text transform="translate(0,664.2) scale(1,1.0)" fill="#8080b4"><tspan x="652.6">=</tspan></text>
<text transform="translate(0,664.2) scale(1,1.0)" fill="#8080b4"><tspan x="705.6">=</tspan></text>
<text transform="translate(0,664.2) scale(1,1.0)" fill="#8080b4"><tspan x="757.6">=</tspan></text>
<text transform="translate(0,664.2) scale(1,1.0)" fill="#8080b4"><tspan x="810.6">=</tspan></text>
<text transform="translate(0,664.2) scale(1,1.0)" fill="#8080b4"><tspan x="863.6">=</tspan></text>
<text transform="translate(0,664.2) scale(1,1.0)" fill="#8080b4"><tspan x="916.6">=</tspan></text>
<text transform="translate(0,694) scale(1,1.07)"><tspan x="441 450 457 464 471 478 482 485 492">Repeating</tspan> <tspan x="503 512 515 522 533 540 547 551">Elements</tspan> <tspan x="562 569">by</tspan> <tspan x="580 589 596 603 610 617 621 632 639 646 653 660">RepeatMasker</tspan></text>
<text transform="translate(0,708) scale(1,1.07)"><tspan x="68 77 84 91 98 105 109 120 127 134 141 148">RepeatMasker</tspan></text>
<rect x="156" y="696" width="793" height="15" fill="#000" shape-rendering="crispEdges"/>
</svg>
</body></html>
